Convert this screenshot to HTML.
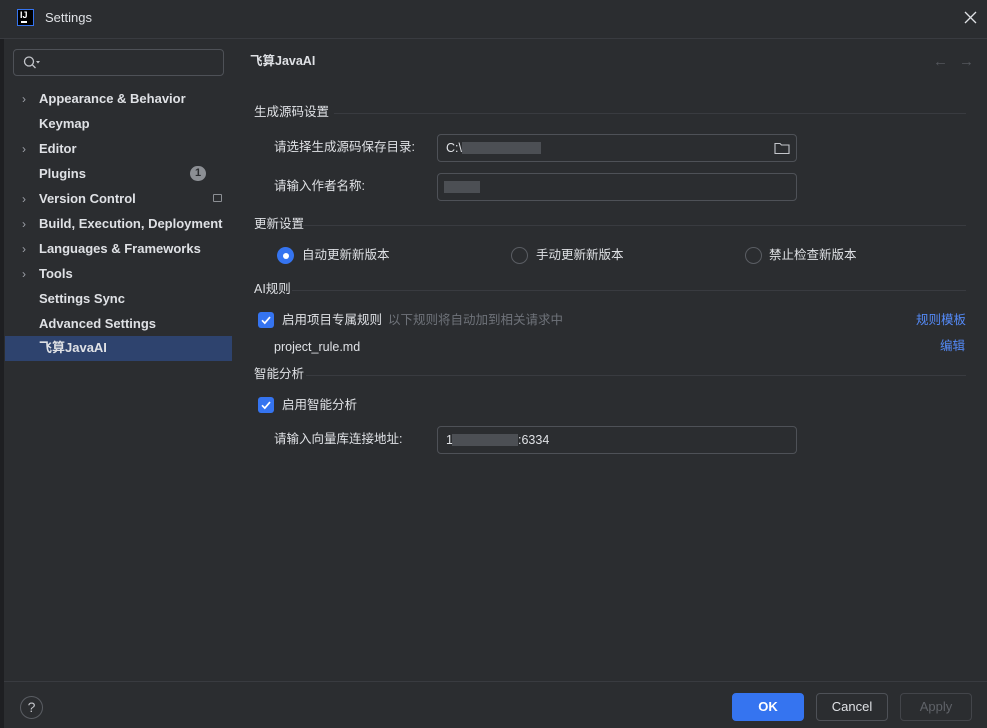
<!DOCTYPE html>
<html><head><meta charset="utf-8"><style>
*{box-sizing:border-box;margin:0;padding:0}
body{width:987px;height:728px;background:#2b2d30;font-family:"Liberation Sans","Noto Sans CJK SC",sans-serif;font-size:13px;line-height:16px;color:#dfe1e5;position:relative;overflow:hidden}
.a{position:absolute;white-space:nowrap}
.leftedge{left:0;top:38px;width:4px;height:690px;background:#1e1f22}
.hl{height:1px;background:#393b40}
.nav{left:39px;font-weight:bold;font-size:13px}
.chev{left:22px;color:#9da0a8;font-size:12px}
.box{border:1px solid #4e5157;border-radius:4px;background:#2b2d30}
.sec{left:254px;font-size:12.5px}
.lab{font-size:12.5px}
.radio{width:17px;height:17px;border-radius:50%;border:1.5px solid #5a5d63}
.chk{width:16px;height:16px;border-radius:3px;background:#3574f0}
.blur{background:#55585e;height:12px}
.link{color:#548af7;font-size:12.5px}
.btn{height:28px;border-radius:4px;border:1px solid #4e5157;text-align:center;line-height:26px;font-size:13px}
</style></head><body>
<div class="a leftedge"></div>
<div class="a" style="left:17px;top:9px;width:17px;height:17px;border:1.5px solid #3574f0;background:#000;"><div class="a" style="left:2px;top:0;color:#fff;font-size:9px;font-weight:bold;line-height:10px">IJ</div><div class="a" style="left:3px;top:11px;width:6px;height:1.5px;background:#fff"></div></div>
<div class="a" style="left:45px;top:10px;font-size:13px">Settings</div>
<svg class="a" style="left:964px;top:11px" width="13" height="13"><path d="M1 1L12 12M12 1L1 12" stroke="#dfe1e5" stroke-width="1.3"/></svg>
<div class="a hl" style="left:0;top:38px;width:987px"></div>
<div class="a box" style="left:13px;top:49px;width:211px;height:27px"></div>
<svg class="a" style="left:22px;top:55px" width="20" height="16"><circle cx="7" cy="6.5" r="4.5" stroke="#c4c6cb" stroke-width="1.3" fill="none"/><path d="M10.3 9.8L13.5 13" stroke="#c4c6cb" stroke-width="1.3"/><path d="M14 6h4l-2 2.5z" fill="#c4c6cb"/></svg>
<div class="a chev" style="top:91px">&#x203A;</div><div class="a nav" style="top:91px">Appearance &amp; Behavior</div>
<div class="a nav" style="top:116px">Keymap</div>
<div class="a chev" style="top:141px">&#x203A;</div><div class="a nav" style="top:141px">Editor</div>
<div class="a nav" style="top:166px">Plugins</div>
<div class="a" style="left:190px;top:166px;width:16px;height:15px;border-radius:8px;background:#8c8f94;color:#2b2d30;font-size:11px;font-weight:bold;text-align:center;line-height:15px">1</div>
<div class="a chev" style="top:191px">&#x203A;</div><div class="a nav" style="top:191px">Version Control</div>
<div class="a" style="left:213px;top:194px;width:9px;height:8px;border:1px solid #8c8f94;border-radius:1px"></div>
<div class="a chev" style="top:216px">&#x203A;</div><div class="a nav" style="top:216px">Build, Execution, Deployment</div>
<div class="a chev" style="top:241px">&#x203A;</div><div class="a nav" style="top:241px">Languages &amp; Frameworks</div>
<div class="a chev" style="top:266px">&#x203A;</div><div class="a nav" style="top:266px">Tools</div>
<div class="a nav" style="top:291px">Settings Sync</div>
<div class="a nav" style="top:316px">Advanced Settings</div>
<div class="a" style="left:5px;top:336px;width:227px;height:25px;background:#2e436e"></div>
<div class="a nav" style="top:340px">飞算JavaAI</div>
<div class="a" style="left:250px;top:53px;font-weight:bold;font-size:12.5px">飞算JavaAI</div>
<div class="a" style="left:933px;top:54px;color:#54575c;font-size:15px">&larr;</div>
<div class="a" style="left:959px;top:54px;color:#54575c;font-size:15px">&rarr;</div>

<div class="a sec" style="top:104px">生成源码设置</div><div class="a hl" style="left:334px;top:113px;width:632px"></div>
<div class="a lab" style="left:274px;top:139px">请选择生成源码保存目录:</div>
<div class="a box" style="left:437px;top:134px;width:360px;height:28px"></div>
<div class="a" style="left:446px;top:140px;font-size:12.5px">C:\</div>
<div class="a blur" style="left:462px;top:142px;width:79px;opacity:.8"></div>
<svg class="a" style="left:774px;top:141px" width="16" height="14"><path d="M1 2.5h5l1.5 1.5h7.5v8.5h-14z" fill="none" stroke="#c4c6cb" stroke-width="1.1"/></svg>
<div class="a lab" style="left:274px;top:178px">请输入作者名称:</div>
<div class="a box" style="left:437px;top:173px;width:360px;height:28px"></div>
<div class="a blur" style="left:444px;top:181px;width:36px;opacity:.8"></div>

<div class="a sec" style="top:216px">更新设置</div><div class="a hl" style="left:303px;top:225px;width:663px"></div>
<div class="a" style="left:277px;top:247px;width:17px;height:17px;border-radius:50%;background:#3574f0"><div class="a" style="left:5.5px;top:5.5px;width:6px;height:6px;border-radius:50%;background:#fff"></div></div>
<div class="a lab" style="left:302px;top:247px">自动更新新版本</div>
<div class="a radio" style="left:511px;top:247px"></div><div class="a lab" style="left:536px;top:247px">手动更新新版本</div>
<div class="a radio" style="left:745px;top:247px"></div><div class="a lab" style="left:769px;top:247px">禁止检查新版本</div>

<div class="a sec" style="top:281px">AI规则</div><div class="a hl" style="left:292px;top:290px;width:674px"></div>
<div class="a chk" style="left:258px;top:312px"><svg width="16" height="16"><path d="M4 8.3l2.8 2.8 5.2-6" stroke="#fff" stroke-width="1.7" fill="none"/></svg></div>
<div class="a lab" style="left:282px;top:312px">启用项目专属规则</div>
<div class="a lab" style="left:388px;top:312px;color:#6f737a">以下规则将自动加到相关请求中</div>
<div class="a link" style="left:916px;top:312px">规则模板</div>
<div class="a lab" style="left:274px;top:339px">project_rule.md</div>
<div class="a link" style="left:940px;top:338px">编辑</div>

<div class="a sec" style="top:366px">智能分析</div><div class="a hl" style="left:306px;top:375px;width:660px"></div>
<div class="a chk" style="left:258px;top:397px"><svg width="16" height="16"><path d="M4 8.3l2.8 2.8 5.2-6" stroke="#fff" stroke-width="1.7" fill="none"/></svg></div>
<div class="a lab" style="left:282px;top:397px">启用智能分析</div>
<div class="a lab" style="left:274px;top:431px">请输入向量库连接地址:</div>
<div class="a box" style="left:437px;top:426px;width:360px;height:28px"></div>
<div class="a" style="left:446px;top:432px;font-size:12.5px">1</div>
<div class="a blur" style="left:452px;top:434px;width:66px;opacity:.8"></div>
<div class="a" style="left:518px;top:432px;font-size:12.5px">:6334</div>

<div class="a hl" style="left:4px;top:681px;width:983px"></div>
<div class="a" style="left:20px;top:696px;width:23px;height:23px;border-radius:50%;border:1px solid #5a5d63;color:#c4c6cb;text-align:center;line-height:21px;font-size:14px">?</div>
<div class="a btn" style="left:732px;top:693px;width:72px;background:#3574f0;border-color:#3574f0;color:#fff;font-weight:bold">OK</div>
<div class="a btn" style="left:816px;top:693px;width:72px">Cancel</div>
<div class="a btn" style="left:900px;top:693px;width:72px;border-color:#43454a;color:#5f6268">Apply</div>
</body></html>
